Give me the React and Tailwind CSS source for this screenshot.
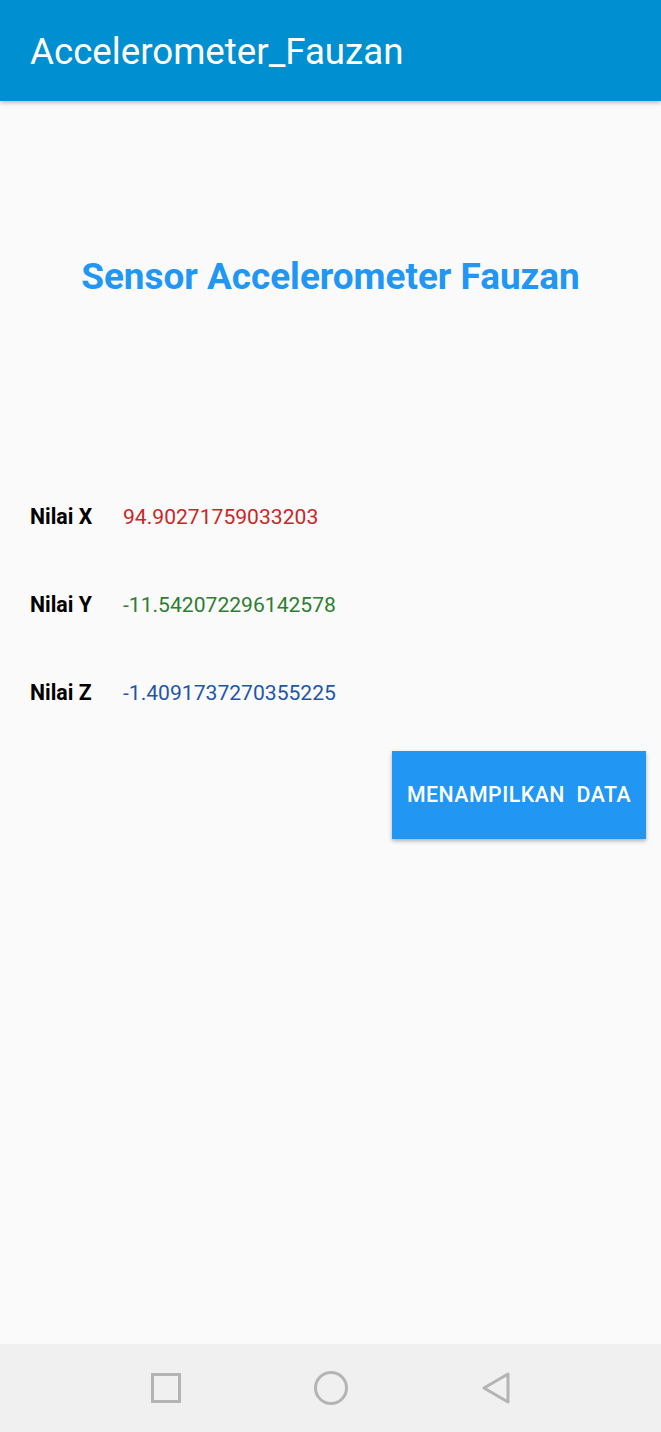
export default function App() {
  const rows = [
    { label: 'Nilai X', value: '94.90271759033203', color: 'text-[#c62828]' },
    { label: 'Nilai Y', value: '-11.542072296142578', color: 'text-[#2e7d32]' },
    { label: 'Nilai Z', value: '-1.4091737270355225', color: 'text-[#1e56a8]' },
  ]

  return (
    <div className="w-[661px] h-[1432px] flex flex-col bg-[#fafafa] font-['Roboto',sans-serif] overflow-hidden">
      <header className="h-[101px] shrink-0 bg-[#008fd0] flex items-center px-[30px] shadow-[0_2px_4px_rgba(0,0,0,0.25)] z-10">
        <h1 className="text-white text-[36.7px] leading-none mt-[3px]">Accelerometer_Fauzan</h1>
      </header>

      <main className="flex-1 flex flex-col">
        <h2 className="mt-[156px] text-center text-[#2196f3] text-[36.9px] font-bold leading-[40px]">
          Sensor Accelerometer Fauzan
        </h2>

        <div className="mt-[206px] flex flex-col gap-[60px] pl-[30px]">
          {rows.map(r => (
            <div key={r.label} className="flex items-center h-[28px]">
              <span className="w-[93px] text-[21.3px] font-bold text-black">{r.label}</span>
              <span className={`text-[21.1px] ${r.color}`}>{r.value}</span>
            </div>
          ))}
        </div>

        <div className="flex justify-end pr-[15px] mt-[44px]">
          <button className="w-[254px] h-[88px] bg-[#2196f3] text-white text-[21.3px] font-medium tracking-[0.5px] whitespace-pre shadow-[0_2px_4px_rgba(0,0,0,0.3)]">
            MENAMPILKAN  DATA
          </button>
        </div>
      </main>

      <nav className="h-[88px] shrink-0 bg-[#f0f0f0] flex items-center justify-center gap-[133px]">
        <svg width="30" height="30" viewBox="0 0 30 30">
          <rect x="1.5" y="1.5" width="27" height="27" fill="none" stroke="#b4b4b4" strokeWidth="3" />
        </svg>
        <svg width="34" height="34" viewBox="0 0 34 34">
          <circle cx="17" cy="17" r="15.5" fill="none" stroke="#b4b4b4" strokeWidth="3" />
        </svg>
        <svg width="30" height="32" viewBox="0 0 30 32">
          <path d="M27 2 L3 16 L27 30 Z" fill="none" stroke="#b4b4b4" strokeWidth="3" strokeLinejoin="round" />
        </svg>
      </nav>
    </div>
  )
}
